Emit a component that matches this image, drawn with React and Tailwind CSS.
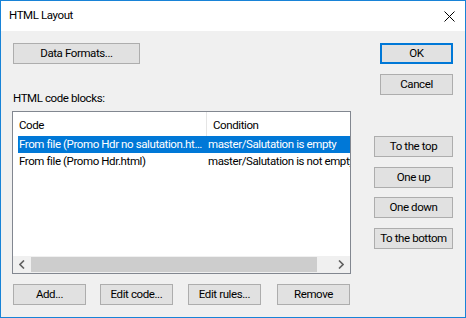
import React from 'react';

const font = { fontFamily: 'Roboto, "Noto Sans", sans-serif', letterSpacing: '-0.4px' };

const Btn = ({ children, className = '', def = false }) => (
  <button
    className={`h-[21px] bg-[#e1e1e1] text-[11.5px] leading-none text-black whitespace-nowrap flex items-center justify-center ${
      def ? 'border-2 border-[#0078d7]' : 'border border-[#adadad]'
    } ${className}`}
  >
    {children}
  </button>
);

const rows = [
  { code: 'From file (Promo Hdr no salutation.html)', cond: 'master/Salutation is empty', selected: true },
  { code: 'From file (Promo Hdr.html)', cond: 'master/Salutation is not empty', selected: false },
];

const App = () => {
  return (
    <div className="w-[466px] h-[318px] border border-[#1883d7] bg-[#f0f0f0] flex flex-col overflow-hidden" style={font}>
      {/* Title bar */}
      <div className="h-[30px] bg-white flex items-center justify-between pl-[8px] pr-[10px] shrink-0">
        <span className="text-[11.5px] text-black">HTML Layout</span>
        <svg width="11" height="11" viewBox="0 0 11 11" className="mt-[1px]">
          <path d="M0.5 0.5 L10.5 10.5 M10.5 0.5 L0.5 10.5" stroke="#000" strokeWidth="1" fill="none" />
        </svg>
      </div>

      {/* Body */}
      <div className="flex flex-1 pl-[11px] pr-[12px] pt-[12px]">
        <div className="w-[339px] flex flex-col">
          <Btn className="w-[127px] ml-[1px]">Data Formats...</Btn>
          <div className="text-[11.5px] text-black mt-[27px] ml-[1px] leading-[14px]">HTML code blocks:</div>

          {/* List view */}
          <div className="mt-[6px] h-[163px] border border-[#828790] bg-white flex flex-col">
            <div className="h-[24px] flex text-[11.5px] text-black shrink-0">
              <div className="w-[194px] shrink-0 pl-[6px] pt-[5px] border-r border-[#e5e5e5]">Code</div>
              <div className="pl-[6px] pt-[5px]">Condition</div>
            </div>
            <div className="flex-1 pl-[5px]">
              {rows.map((r) => (
                <div
                  key={r.code}
                  className={`h-[17px] flex text-[11.5px] leading-[17px] ${r.selected ? 'bg-[#0078d7] text-white' : 'text-black'}`}
                >
                  <div className="w-[189px] shrink-0 pl-[1px] pr-[4px] whitespace-nowrap overflow-hidden text-ellipsis">{r.code}</div>
                  <div className="flex-1 min-w-0 pl-[1px] whitespace-nowrap overflow-hidden">{r.cond}</div>
                </div>
              ))}
            </div>
            {/* Horizontal scrollbar */}
            <div className="h-[17px] bg-[#f0f0f0] flex items-center shrink-0">
              <div className="w-[18px] flex justify-center">
                <svg width="6" height="9" viewBox="0 0 6 9">
                  <path d="M5 0.5 L1 4.5 L5 8.5" stroke="#606060" strokeWidth="1.6" fill="none" />
                </svg>
              </div>
              <div className="w-[286px] h-[15px] bg-[#cdcdcd]" />
              <div className="flex-1 flex justify-end pr-[6px]">
                <svg width="6" height="9" viewBox="0 0 6 9">
                  <path d="M1 0.5 L5 4.5 L1 8.5" stroke="#606060" strokeWidth="1.6" fill="none" />
                </svg>
              </div>
            </div>
          </div>

          <div className="flex mt-[10px] ml-[1px]">
            <Btn className="w-[73px]">Add...</Btn>
            <Btn className="w-[73px] ml-[14px]">Edit code...</Btn>
            <Btn className="w-[73px] ml-[15px]">Edit rules...</Btn>
            <Btn className="w-[73px] ml-[16px]">Remove</Btn>
          </div>
        </div>

        <div className="flex-1 flex flex-col items-end">
          <Btn def className="w-[73px]">OK</Btn>
          <Btn className="w-[73px] mt-[10px]">Cancel</Btn>
          <Btn className="w-[79px] mt-[41px]">To the top</Btn>
          <Btn className="w-[79px] mt-[10px]">One up</Btn>
          <Btn className="w-[79px] mt-[9px]">One down</Btn>
          <Btn className="w-[79px] mt-[10px]">To the bottom</Btn>
        </div>
      </div>
    </div>
  );
};

export default App;
